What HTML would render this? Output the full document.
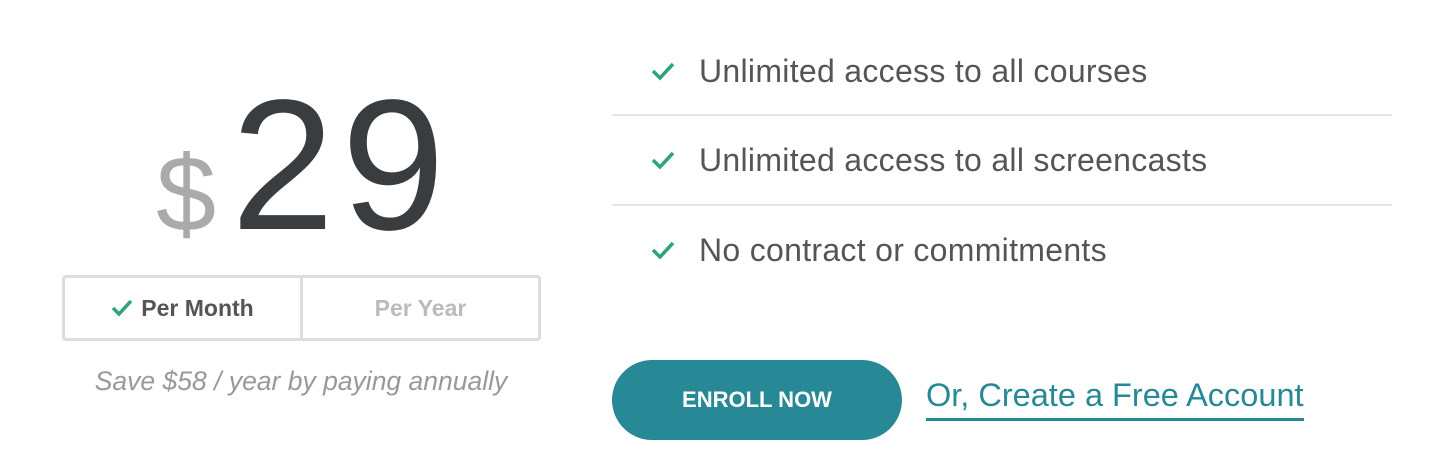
<!DOCTYPE html>
<html><head><style>
body{margin:0;width:1430px;height:468px;background:#fff;font-family:"Liberation Sans",sans-serif;position:relative;overflow:hidden}
.a{position:absolute}
.dollar{left:156px;top:140px;font-size:108px;color:#aaa;line-height:1}
.num{left:231px;top:73px;font-size:186px;color:#3a3d40;line-height:1;letter-spacing:7px}
.tog{left:62px;top:275px;width:473px;height:60px;border:3px solid #ddd;border-radius:4px;display:flex}
.tog div{flex:1;display:flex;align-items:center;justify-content:center;font-weight:bold;font-size:23px}
.tog div:first-child{border-right:3px solid #ddd;color:#555}
.tog div:last-child{color:#bbb}
.save{left:40px;width:522px;text-align:center;top:366px;font-size:26.5px;font-style:italic;color:#999}
.row{left:651px;font-size:32px;color:#555;line-height:1;letter-spacing:0.3px}
.row svg{position:absolute;left:0;top:6px}
.row span{position:absolute;left:48px;top:0;white-space:nowrap}
.hr{left:612px;width:780px;height:2px;background:#e5e5e5}
.btn{left:612px;top:360px;width:290px;height:80px;border-radius:40px;background:#278896;color:#fff;font-weight:bold;font-size:22px;display:flex;align-items:center;justify-content:center}
.link{left:926px;top:378px;font-size:32.5px;color:#278896;white-space:nowrap;border-bottom:3px solid #278896;padding-bottom:4px;line-height:1.1}
</style></head><body>
<div class="a dollar">$</div>
<div class="a num">29</div>
<div class="a tog"><div><svg width="22" height="18" viewBox="0 0 22 18" style="margin-right:8px"><path d="M2 9l6 6L20 2" stroke="#2fa37a" stroke-width="3.5" fill="none"/></svg>Per Month</div><div>Per Year</div></div>
<div class="a save">Save $58 / year by paying annually</div>
<div class="a row" style="top:55px;width:700px;height:40px"><svg width="24" height="20" viewBox="0 0 24 20"><path d="M2 10l7 7L22 3" stroke="#2fa37a" stroke-width="3.5" fill="none"/></svg><span>Unlimited access to all courses</span></div>
<div class="a hr" style="top:114px"></div>
<div class="a row" style="top:144px;width:700px;height:40px"><svg width="24" height="20" viewBox="0 0 24 20"><path d="M2 10l7 7L22 3" stroke="#2fa37a" stroke-width="3.5" fill="none"/></svg><span>Unlimited access to all screencasts</span></div>
<div class="a hr" style="top:204px"></div>
<div class="a row" style="top:234px;width:700px;height:40px"><svg width="24" height="20" viewBox="0 0 24 20"><path d="M2 10l7 7L22 3" stroke="#2fa37a" stroke-width="3.5" fill="none"/></svg><span>No contract or commitments</span></div>
<div class="a btn">ENROLL NOW</div>
<div class="a link">Or, Create a Free Account</div>
</body></html>
